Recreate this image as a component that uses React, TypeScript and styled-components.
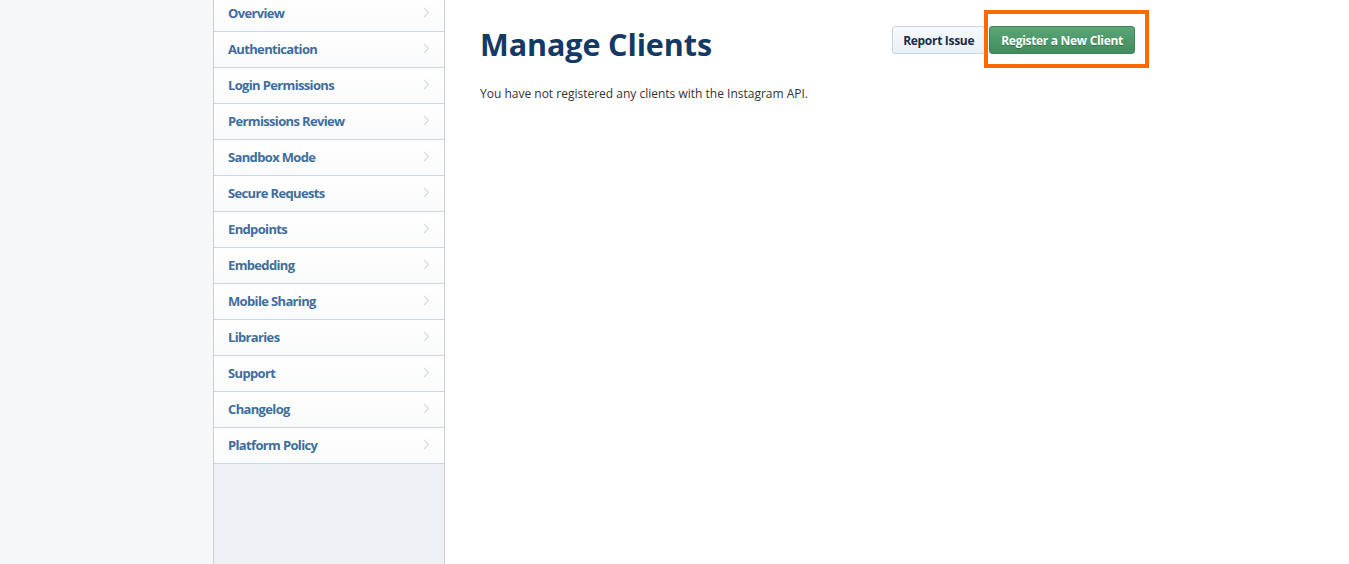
import styled, { createGlobalStyle } from 'styled-components';

const GlobalStyle = createGlobalStyle`
  html, body {
    margin: 0;
    padding: 0;
    height: 100%;
    overflow: hidden;
    background: #ffffff;
    font-family: "Open Sans", "Noto Sans", sans-serif;
  }
  #root {
    height: 100%;
  }
`;

const navItems = [
  'Overview',
  'Authentication',
  'Login Permissions',
  'Permissions Review',
  'Sandbox Mode',
  'Secure Requests',
  'Endpoints',
  'Embedding',
  'Mobile Sharing',
  'Libraries',
  'Support',
  'Changelog',
  'Platform Policy',
];

const Chevron = () => (
  <svg width="7" height="11" viewBox="0 0 7 11" fill="none">
    <path d="M1 1l4.5 4.5L1 10" stroke="#d9dde2" strokeWidth="1.4" />
  </svg>
);

export default function App() {
  return (
    <>
      <GlobalStyle />
      <Page>
        <Gutter />
        <Sidebar>
          <NavList>
            {navItems.map((item) => (
              <NavItem key={item}>
                <NavLink>{item}</NavLink>
                <Chevron />
              </NavItem>
            ))}
          </NavList>
        </Sidebar>
        <Main>
          <HeaderRow>
            <Title>Manage Clients</Title>
            <Actions>
              <SecondaryButton type="button">Report Issue</SecondaryButton>
              <Highlight>
                <PrimaryButton type="button">Register a New Client</PrimaryButton>
              </Highlight>
            </Actions>
          </HeaderRow>
          <Message>You have not registered any clients with the Instagram API.</Message>
        </Main>
      </Page>
    </>
  );
}

const Page = styled.div`
  display: flex;
  height: 100%;
`;

const Gutter = styled.div`
  width: 213px;
  flex-shrink: 0;
  background: #f6f7f8;
`;

const Sidebar = styled.nav`
  width: 230px;
  flex-shrink: 0;
  background: #eef1f4;
  border-left: 1px solid #c9d2db;
  border-right: 1px solid #c9d2db;
`;

const NavList = styled.ul`
  list-style: none;
  margin: -4px 0 0;
  padding: 0;
`;

const NavItem = styled.li`
  height: 36px;
  box-sizing: border-box;
  display: flex;
  align-items: center;
  justify-content: space-between;
  padding: 0 14px 2px;
  background: linear-gradient(#ffffff, #f9fafb);
  border-bottom: 1px solid #cdd5dd;
`;

const NavLink = styled.a`
  font-size: 13px;
  font-weight: 700;
  color: #3f6d9c;
  letter-spacing: -0.65px;
  cursor: pointer;
`;

const Main = styled.main`
  flex: 1;
  padding: 20px 35px 0;
`;

const HeaderRow = styled.div`
  width: 655px;
  display: flex;
  align-items: flex-start;
  justify-content: space-between;
`;

const Title = styled.h1`
  margin: 3px 0 0;
  font-size: 30.5px;
  font-weight: 700;
  color: #143a63;
  letter-spacing: -0.1px;
`;

const Actions = styled.div`
  display: flex;
  align-items: center;
  gap: 4px;
  margin-top: 6px;
`;

const Button = styled.button`
  height: 28px;
  padding: 0 10px;
  font-family: inherit;
  font-size: 12px;
  font-weight: 700;
  letter-spacing: -0.3px;
  border-radius: 3px;
  cursor: pointer;
  white-space: nowrap;
`;

const SecondaryButton = styled(Button)`
  color: #1a2e44;
  background: linear-gradient(#f7fafd, #e9f0f6);
  border: 1px solid #c5d5e4;
`;

const PrimaryButton = styled(Button)`
  padding: 0 11px;
  color: #ffffff;
  background: linear-gradient(#5aa676, #428c5d);
  border: 1px solid #3f8558;
  text-shadow: 0 1px 0 rgba(0, 0, 0, 0.25);
`;

const Highlight = styled.span`
  position: relative;
  display: inline-flex;

  &::after {
    content: '';
    position: absolute;
    top: -16px;
    left: -5px;
    right: -14px;
    bottom: -14px;
    border: 4px solid #ff6a00;
    pointer-events: none;
  }
`;

const Message = styled.p`
  margin: 20px 0 0;
  font-size: 12px;
  color: #333333;
`;
